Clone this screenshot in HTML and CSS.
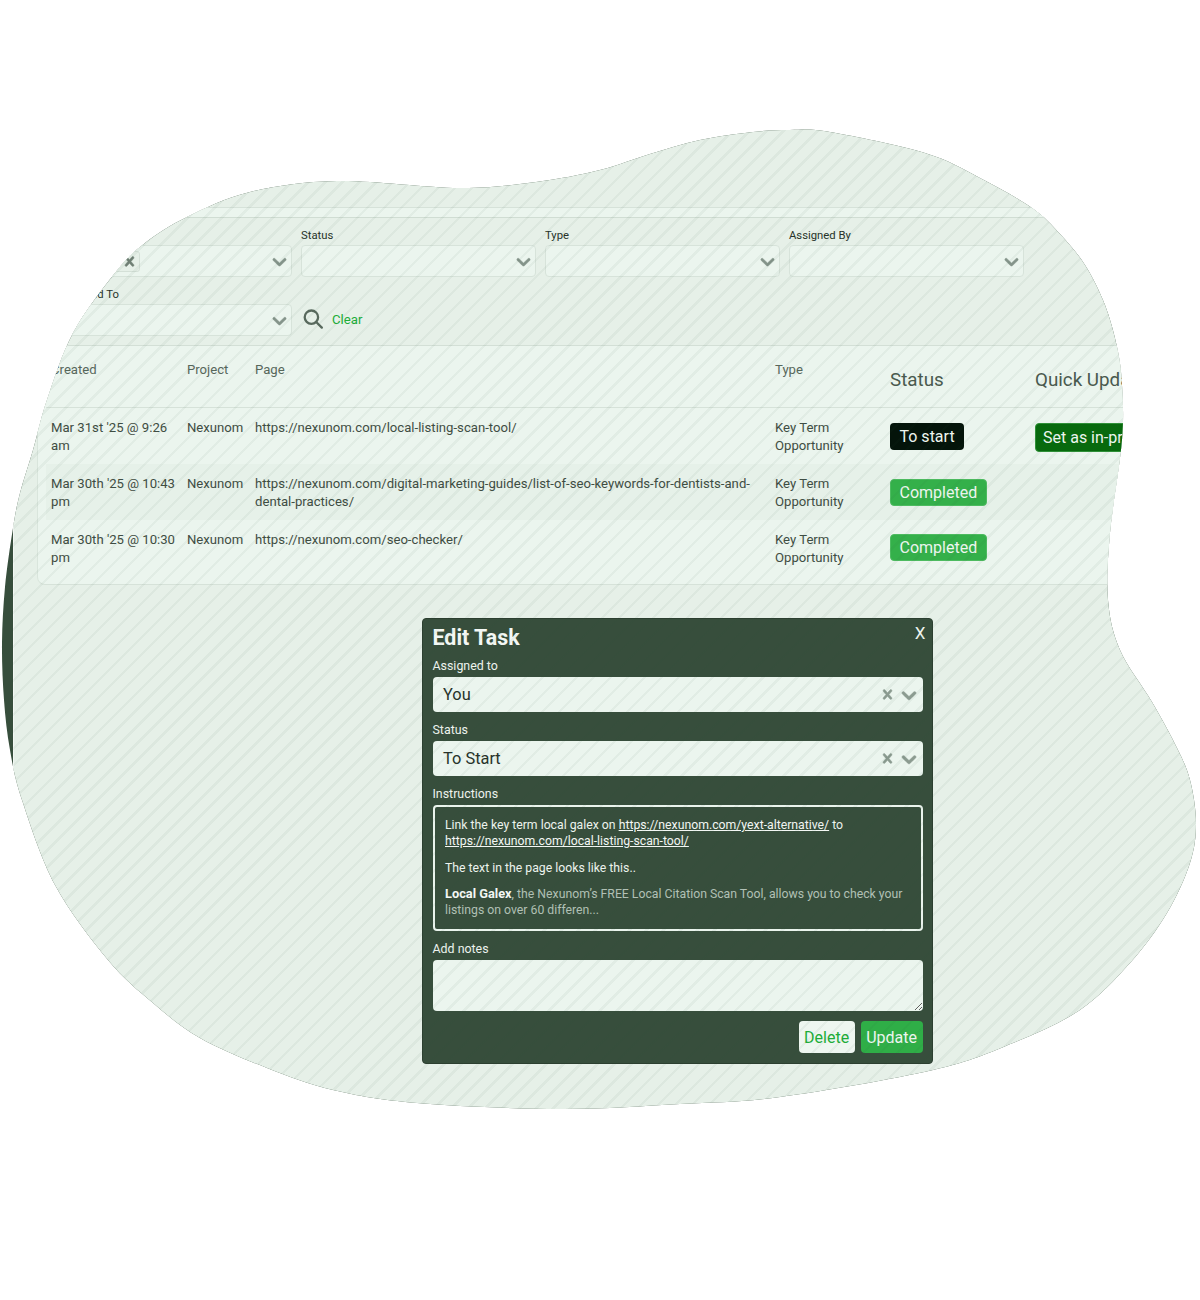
FILE: index.html
```html
<!DOCTYPE html>
<html lang="en">
<head>
    <meta charset="UTF-8">
    <meta name="viewport" content="width=device-width, initial-scale=1.0">
    <link rel="stylesheet" href="styles.css">
    <title>Tasks</title>
</head>
<body>
    <div class="blob">
        <div class="sheet">
            <div class="topbar"></div>

            <div class="filters">
                <div class="field">
                    <label class="field-label">Project</label>
                    <div class="select">
                        <span class="tag">Nexunom
                            <svg class="tag-x" viewBox="0 0 20 20"><path d="M14.348 14.849c-0.469 0.469-1.229 0.469-1.697 0l-2.651-3.030-2.651 3.029c-0.469 0.469-1.229 0.469-1.697 0-0.469-0.469-0.469-1.229 0-1.697l2.758-3.15-2.759-3.152c-0.469-0.469-0.469-1.228 0-1.697s1.228-0.469 1.697 0l2.652 3.031 2.651-3.031c0.469-0.469 1.228-0.469 1.697 0s0.469 1.229 0 1.697l-2.758 3.152 2.758 3.15c0.469 0.469 0.469 1.229 0 1.698z"/></svg>
                        </span>
                        <svg class="chevron" viewBox="0 0 20 20"><path d="M4.516 7.548c0.436-0.446 1.043-0.481 1.576 0l3.908 3.747 3.908-3.747c0.533-0.481 1.141-0.446 1.574 0 0.436 0.445 0.408 1.197 0 1.615-0.406 0.418-4.695 4.502-4.695 4.502-0.217 0.223-0.502 0.335-0.787 0.335s-0.57-0.112-0.789-0.335c0 0-4.287-4.084-4.695-4.502s-0.436-1.17 0-1.615z"/></svg>
                    </div>
                </div>
                <div class="field">
                    <label class="field-label">Status</label>
                    <div class="select">
                        <svg class="chevron" viewBox="0 0 20 20"><path d="M4.516 7.548c0.436-0.446 1.043-0.481 1.576 0l3.908 3.747 3.908-3.747c0.533-0.481 1.141-0.446 1.574 0 0.436 0.445 0.408 1.197 0 1.615-0.406 0.418-4.695 4.502-4.695 4.502-0.217 0.223-0.502 0.335-0.787 0.335s-0.57-0.112-0.789-0.335c0 0-4.287-4.084-4.695-4.502s-0.436-1.17 0-1.615z"/></svg>
                    </div>
                </div>
                <div class="field">
                    <label class="field-label">Type</label>
                    <div class="select">
                        <svg class="chevron" viewBox="0 0 20 20"><path d="M4.516 7.548c0.436-0.446 1.043-0.481 1.576 0l3.908 3.747 3.908-3.747c0.533-0.481 1.141-0.446 1.574 0 0.436 0.445 0.408 1.197 0 1.615-0.406 0.418-4.695 4.502-4.695 4.502-0.217 0.223-0.502 0.335-0.787 0.335s-0.57-0.112-0.789-0.335c0 0-4.287-4.084-4.695-4.502s-0.436-1.17 0-1.615z"/></svg>
                    </div>
                </div>
                <div class="field">
                    <label class="field-label">Assigned By</label>
                    <div class="select">
                        <svg class="chevron" viewBox="0 0 20 20"><path d="M4.516 7.548c0.436-0.446 1.043-0.481 1.576 0l3.908 3.747 3.908-3.747c0.533-0.481 1.141-0.446 1.574 0 0.436 0.445 0.408 1.197 0 1.615-0.406 0.418-4.695 4.502-4.695 4.502-0.217 0.223-0.502 0.335-0.787 0.335s-0.57-0.112-0.789-0.335c0 0-4.287-4.084-4.695-4.502s-0.436-1.17 0-1.615z"/></svg>
                    </div>
                </div>
                <div class="field">
                    <label class="field-label">Assigned To</label>
                    <div class="select">
                        <svg class="chevron" viewBox="0 0 20 20"><path d="M4.516 7.548c0.436-0.446 1.043-0.481 1.576 0l3.908 3.747 3.908-3.747c0.533-0.481 1.141-0.446 1.574 0 0.436 0.445 0.408 1.197 0 1.615-0.406 0.418-4.695 4.502-4.695 4.502-0.217 0.223-0.502 0.335-0.787 0.335s-0.57-0.112-0.789-0.335c0 0-4.287-4.084-4.695-4.502s-0.436-1.17 0-1.615z"/></svg>
                    </div>
                </div>
                <div class="filter-actions">
                    <svg class="search-icon" viewBox="0 0 20 20"><circle cx="8.4" cy="8.2" r="6.7"/><path d="M13.2 13l5.6 5.6"/></svg>
                    <span class="clear">Clear</span>
                </div>
            </div>

            <div class="tasks">
                <table class="task-table">
                    <colgroup>
                        <col class="col-created">
                        <col class="col-project">
                        <col class="col-page">
                        <col class="col-type">
                        <col class="col-status">
                        <col class="col-quick">
                    </colgroup>
                    <thead>
                        <tr>
                            <th>Created</th>
                            <th>Project</th>
                            <th>Page</th>
                            <th>Type</th>
                            <th class="th-big">Status</th>
                            <th class="th-big">Quick Update</th>
                        </tr>
                    </thead>
                    <tbody>
                        <tr>
                            <td>Mar 31st '25 @ 9:26 am</td>
                            <td>Nexunom</td>
                            <td>https://nexunom.com/local-listing-scan-tool/</td>
                            <td>Key Term Opportunity</td>
                            <td class="td-badge"><span class="badge badge-start">To start</span></td>
                            <td class="td-badge"><span class="btn-quick">Set as in-progress</span></td>
                        </tr>
                        <tr>
                            <td>Mar 30th '25 @ 10:43 pm</td>
                            <td>Nexunom</td>
                            <td>https://nexunom.com/digital-marketing-guides/list-of-seo-keywords-for-dentists-and-dental-practices/</td>
                            <td>Key Term Opportunity</td>
                            <td class="td-badge"><span class="badge badge-done">Completed</span></td>
                            <td></td>
                        </tr>
                        <tr>
                            <td>Mar 30th '25 @ 10:30 pm</td>
                            <td>Nexunom</td>
                            <td>https://nexunom.com/seo-checker/</td>
                            <td>Key Term Opportunity</td>
                            <td class="td-badge"><span class="badge badge-done">Completed</span></td>
                            <td></td>
                        </tr>
                    </tbody>
                </table>
            </div>

            <div class="modal">
                <div class="modal-head">
                    <h2>Edit Task</h2>
                    <span class="modal-close">X</span>
                </div>

                <div class="modal-field">
                    <label>Assigned to</label>
                    <div class="modal-select">
                        <span>You</span>
                        <svg class="cross" viewBox="0 0 20 20"><path d="M14.348 14.849c-0.469 0.469-1.229 0.469-1.697 0l-2.651-3.030-2.651 3.029c-0.469 0.469-1.229 0.469-1.697 0-0.469-0.469-0.469-1.229 0-1.697l2.758-3.15-2.759-3.152c-0.469-0.469-0.469-1.228 0-1.697s1.228-0.469 1.697 0l2.652 3.031 2.651-3.031c0.469-0.469 1.228-0.469 1.697 0s0.469 1.229 0 1.697l-2.758 3.152 2.758 3.15c0.469 0.469 0.469 1.229 0 1.698z"/></svg>
                        <svg class="chevron" viewBox="0 0 20 20"><path d="M4.516 7.548c0.436-0.446 1.043-0.481 1.576 0l3.908 3.747 3.908-3.747c0.533-0.481 1.141-0.446 1.574 0 0.436 0.445 0.408 1.197 0 1.615-0.406 0.418-4.695 4.502-4.695 4.502-0.217 0.223-0.502 0.335-0.787 0.335s-0.57-0.112-0.789-0.335c0 0-4.287-4.084-4.695-4.502s-0.436-1.17 0-1.615z"/></svg>
                    </div>
                </div>

                <div class="modal-field">
                    <label>Status</label>
                    <div class="modal-select">
                        <span>To Start</span>
                        <svg class="cross" viewBox="0 0 20 20"><path d="M14.348 14.849c-0.469 0.469-1.229 0.469-1.697 0l-2.651-3.030-2.651 3.029c-0.469 0.469-1.229 0.469-1.697 0-0.469-0.469-0.469-1.229 0-1.697l2.758-3.15-2.759-3.152c-0.469-0.469-0.469-1.228 0-1.697s1.228-0.469 1.697 0l2.652 3.031 2.651-3.031c0.469-0.469 1.228-0.469 1.697 0s0.469 1.229 0 1.697l-2.758 3.152 2.758 3.15c0.469 0.469 0.469 1.229 0 1.698z"/></svg>
                        <svg class="chevron" viewBox="0 0 20 20"><path d="M4.516 7.548c0.436-0.446 1.043-0.481 1.576 0l3.908 3.747 3.908-3.747c0.533-0.481 1.141-0.446 1.574 0 0.436 0.445 0.408 1.197 0 1.615-0.406 0.418-4.695 4.502-4.695 4.502-0.217 0.223-0.502 0.335-0.787 0.335s-0.57-0.112-0.789-0.335c0 0-4.287-4.084-4.695-4.502s-0.436-1.17 0-1.615z"/></svg>
                    </div>
                </div>

                <div class="modal-field">
                    <label>Instructions</label>
                    <div class="instructions">
                        <p>Link the key term local galex on <a href="#">https://nexunom.com/yext-alternative/</a> to <a href="#">https://nexunom.com/local-listing-scan-tool/</a></p>
                        <p>The text in the page looks like this..</p>
                        <p class="quote"><strong>Local Galex</strong>, the Nexunom’s FREE Local Citation Scan Tool, allows you to check your listings on over 60 differen...</p>
                    </div>
                </div>

                <div class="modal-field">
                    <label>Add notes</label>
                    <textarea class="notes"></textarea>
                </div>

                <div class="modal-buttons">
                    <button class="btn-delete">Delete</button>
                    <button class="btn-update">Update</button>
                </div>
            </div>
        </div>
    </div>
</body>
</html>
```
FILE: styles.css
```css
* {
    box-sizing: border-box;
}

html, body {
    margin: 0;
    padding: 0;
    background-color: #fff;
}

body {
    font-family: Roboto, 'Liberation Sans', sans-serif;
    color: #3f4d43;
    overflow: hidden;
}

/* the organic shape everything is cut to */
.blob {
    position: relative;
    width: 1200px;
    height: 1300px;
    background-color: #374e3c;
    overflow: hidden;
    clip-path: path("M337 181 C371.8 180.3 425.8 187.8 459 188 S512.5 185 536 182 S581 174.7 600 170 S633.3 159 650 154 S682.8 143.7 700 140 S738 133.7 753 132 S777.2 130 790 130 S807.5 128.2 830 132 S900 145.3 925 153 S962.2 168.8 980 178 S1018.7 198.7 1032 208 S1051.2 224.5 1060 234 S1077.5 253.2 1085 265 S1099.7 291.3 1105 305 S1114.2 333.7 1117 347 S1121.2 369.5 1122 385 S1124 415.3 1122 440 S1112.3 506.3 1110 533 S1106.3 580.5 1108 600 S1112.7 633 1120 650 S1142.5 685.7 1152 702 S1170.7 735 1177 748 S1186.8 767.5 1190 780 S1196 809.2 1196 823 S1194.8 848 1190 863 S1177 896.3 1167 913 S1144.5 946.8 1130 963 S1099.5 996.7 1080 1010 S1037.5 1033 1013 1043 S971.8 1061 933 1070 S822.2 1091.3 780 1097 S716.7 1102 680 1104 S603.8 1109.2 560 1109 S454.8 1106.2 417 1103 S358 1095.8 333 1090 S289.2 1076.7 267 1068 S219 1048.8 200 1038 S168.3 1016 153 1003 S124.3 979.7 108 960 S69.3 911.7 55 885 S29.5 822.5 22 800 S13 766.7 10 750 S5.3 717.8 4 700 S1.8 661.8 2 643 S3.2 606.2 5 587 S10.5 543.7 13 528 S16.7 506 20 493 S28.5 465.5 33 450 S40.3 419.5 47 400 S61.7 354.2 73 333 S103 288 115 273 S133 252.3 145 243 S169.5 225.5 187 217 S225 198 250 192 S302.2 181.7 337 181 Z");
}

/* diagonal hatch lying over the whole picture */
.blob::after {
    content: "";
    position: absolute;
    inset: 0;
    pointer-events: none;
    background-image: repeating-linear-gradient(135deg, rgba(40, 80, 55, 0) 0, rgba(40, 80, 55, 0) 9.5px, rgba(40, 80, 55, 0.05) 9.5px, rgba(40, 80, 55, 0.05) 12px);
}

.sheet {
    margin-left: 13px;
    height: 1300px;
    padding-top: 207px;
    background-color: #e6f0e8;
    border-left: 1px solid #f3f8f4;
    overflow: hidden;
}

.topbar {
    height: 11px;
    background-color: #ebf5ee;
    border-top: 1px solid #d6e2d9;
    border-bottom: 1px solid #d0ddd3;
}

.filters {
    display: grid;
    grid-template-columns: repeat(4, 234.5px);
    column-gap: 9.5px;
    row-gap: 10px;
    padding: 10px 0 9px 43px;
}

.field-label {
    display: block;
    height: 15px;
    padding-top: 1px;
    margin-bottom: 2px;
    font-size: 11.3px;
    line-height: 14px;
    color: #27332a;
}

.select {
    display: flex;
    align-items: center;
    justify-content: space-between;
    height: 32px;
    padding: 0 0 0 3px;
    background-color: #ebf5ee;
    border: 1px solid #d7e3da;
    border-radius: 4px;
}

.select .chevron {
    width: 23px;
    height: 23px;
    fill: #84948a;
    stroke: #84948a;
    stroke-width: 0.4;
}

.select .chevron:first-child {
    margin-left: auto;
}

.tag {
    display: flex;
    align-items: center;
    justify-content: space-between;
    width: 79px;
    height: 21px;
    padding-left: 6px;
    font-size: 12px;
    background-color: #e6f0e8;
    border: 1px solid #d4e0d7;
    border-radius: 3px;
}

.tag-x {
    width: 19px;
    height: 19px;
    fill: #708075;
    stroke: #708075;
    stroke-width: 0.5;
}

.filter-actions {
    display: flex;
    align-items: center;
    gap: 9px;
    padding-left: 2px;
    align-self: end;
    height: 30px;
    margin-bottom: 2px;
}

.search-icon {
    width: 20px;
    height: 20px;
    fill: none;
    stroke: #58695d;
    stroke-width: 2.3;
    stroke-linecap: round;
}

.clear {
    padding-top: 1px;
    font-size: 13.2px;
    color: #20ad38;
}

.tasks {
    margin-left: 23px;
    height: 240px;
    padding-left: 8px;
    background-color: #ebf5ee;
    border-top: 1px solid #d3dfd6;
    border-bottom: 1px solid #d6e2d9;
    border-left: 1px solid #d9e5dc;
    border-bottom-left-radius: 8px;
    overflow: hidden;
}

.task-table {
    width: 1134px;
    table-layout: fixed;
    border-collapse: collapse;
    font-size: 13.15px;
    line-height: 18px;
}

.col-created { width: 136px; }
.col-project { width: 68px; }
.col-page { width: 520px; }
.col-type { width: 115px; }
.col-status { width: 145px; }
.col-quick { width: 150px; }

.task-table th {
    height: 61px;
    padding: 15px 5px 0;
    text-align: left;
    vertical-align: top;
    font-weight: 400;
    color: #57675b;
    border-bottom: 1px solid #d6e2d9;
}

.task-table th.th-big {
    padding-top: 23px;
    font-size: 18.8px;
    line-height: 23px;
    color: #4a5a4e;
    white-space: nowrap;
}

.task-table td {
    height: 56.5px;
    padding: 11px 5px 0;
    vertical-align: top;
}

.task-table td.td-badge {
    padding-top: 15px;
    white-space: nowrap;
}

.task-table tbody tr:last-child td.td-badge {
    padding-top: 14px;
}

.task-table tbody tr:nth-child(2) {
    background-color: #e6f1e9;
}

.badge, .btn-quick {
    display: inline-block;
    padding: 0 8.5px;
    font-size: 16px;
    line-height: 25px;
    color: #eef6f0;
    border: 1px solid transparent;
    border-radius: 4px;
}

.badge-start {
    background-color: #04140a;
}

.badge-done {
    background-color: #34b04a;
    border-color: #4dbb60;
}

.btn-quick {
    padding: 0 7px;
    line-height: 27px;
    background-color: #076a0d;
    border-color: #2f9038;
}

.modal {
    width: 511px;
    margin: 33px 0 0 408px;
    padding: 5px 9.5px 10px;
    color: #eef4ef;
    background-color: #374e3c;
    border: 1px solid #2c3f30;
    border-radius: 4px;
}

.modal-head {
    display: flex;
    align-items: flex-start;
    justify-content: space-between;
    margin-bottom: 9px;
}

.modal-head h2 {
    margin: 0;
    padding-top: 1px;
    height: 26px;
    font-size: 21.4px;
    line-height: 26px;
    font-weight: 700;
    color: #f4f8f5;
}

.modal-close {
    margin-right: -3px;
    font-size: 17px;
    line-height: 19px;
}

.modal-field {
    margin-bottom: 11px;
}

.modal-field label {
    display: block;
    height: 14px;
    margin-bottom: 4px;
    font-size: 12.4px;
    line-height: 14px;
}

.modal-select {
    display: flex;
    align-items: center;
    height: 35px;
    padding: 0 2px 0 10.5px;
    font-size: 16.4px;
    color: #27332a;
    background-color: #ebf5ee;
    border-radius: 4px;
}

.modal-select span {
    flex: 1;
}

.modal-select svg {
    fill: #8b9b90;
    stroke: #8b9b90;
    stroke-width: 0.5;
}

.modal-select .cross {
    width: 19px;
    height: 19px;
}

.modal-select .chevron {
    width: 24px;
    height: 24px;
}

.instructions {
    height: 126px;
    padding: 10px 10.5px;
    font-size: 12.25px;
    line-height: 16.3px;
    border: 2px solid #eaf4ed;
    border-radius: 4px;
}

.instructions p {
    margin: 0 0 10px;
}

.instructions a {
    color: #f4f8f5;
}

.quote {
    color: #b2c1b6;
}

.quote strong {
    font-size: 12.8px;
    color: #f4f8f5;
}

.notes {
    display: block;
    width: 100%;
    height: 51px;
    background-color: #ebf5ee;
    border: none;
    border-radius: 4px;
}

.modal-buttons {
    display: flex;
    justify-content: flex-end;
    gap: 6px;
    margin-top: -1px;
}

.modal-buttons button {
    height: 32px;
    padding: 0 5.5px;
    font-family: inherit;
    font-size: 16px;
    border: none;
    border-radius: 4px;
}

.btn-delete {
    color: #20ad38;
    background-color: #eef6f0;
}

.btn-update {
    color: #eef6f0;
    background-color: #2fae47;
}
```
